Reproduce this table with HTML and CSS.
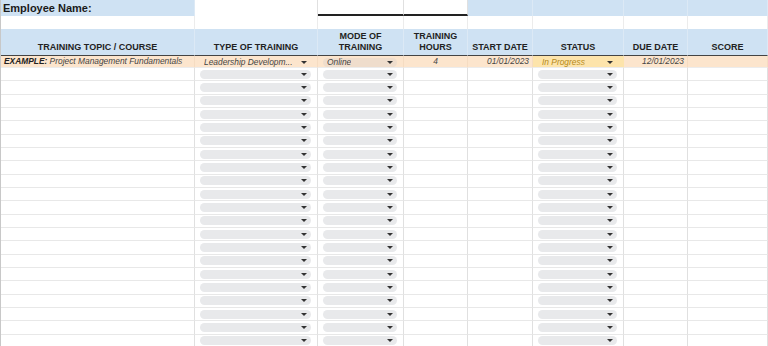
FILE: index.html
```html
<!DOCTYPE html>
<html>
<head>
<meta charset="utf-8">
<link rel="stylesheet" href="styles.css">
</head>
<body>
<div class="sheet">
  <div class="row r-name">
    <div class="c blue name-label">Employee Name:</div>
    <div class="c"></div>
    <div class="c underline"></div>
    <div class="c underline"></div>
    <div class="c blue"></div>
    <div class="c blue"></div>
    <div class="c blue"></div>
    <div class="c blue"></div>
  </div>
  <div class="row r-gap">
    <div class="c"></div><div class="c"></div><div class="c"></div><div class="c"></div><div class="c"></div><div class="c"></div><div class="c"></div><div class="c"></div>
  </div>
  <div class="row r-head">
    <div class="c h">TRAINING TOPIC / COURSE</div>
    <div class="c h">TYPE OF TRAINING</div>
    <div class="c h">MODE OF<br>TRAINING</div>
    <div class="c h">TRAINING<br>HOURS</div>
    <div class="c h">START DATE</div>
    <div class="c h">STATUS</div>
    <div class="c h">DUE DATE</div>
    <div class="c h">SCORE</div>
  </div>
  <div class="row r-ex">
    <div class="c ex-topic"><b>EXAMPLE:</b> Project Management Fundamentals</div>
    <div class="c"><span class="dd plain"><span class="dd-text">Leadership Developm...</span></span></div>
    <div class="c"><span class="dd faint"><span class="dd-text">Online</span></span></div>
    <div class="c center">4</div>
    <div class="c right">01/01/2023</div>
    <div class="c status"><span class="dd plain"><span class="dd-text">In Progress</span></span></div>
    <div class="c right">12/01/2023</div>
    <div class="c"></div>
  </div>
  <div class="row r-body"><div class="c"></div><div class="c"><span class="dd"></span></div><div class="c"><span class="dd"></span></div><div class="c"></div><div class="c"></div><div class="c"><span class="dd"></span></div><div class="c"></div><div class="c"></div></div>
  <div class="row r-body"><div class="c"></div><div class="c"><span class="dd"></span></div><div class="c"><span class="dd"></span></div><div class="c"></div><div class="c"></div><div class="c"><span class="dd"></span></div><div class="c"></div><div class="c"></div></div>
  <div class="row r-body"><div class="c"></div><div class="c"><span class="dd"></span></div><div class="c"><span class="dd"></span></div><div class="c"></div><div class="c"></div><div class="c"><span class="dd"></span></div><div class="c"></div><div class="c"></div></div>
  <div class="row r-body"><div class="c"></div><div class="c"><span class="dd"></span></div><div class="c"><span class="dd"></span></div><div class="c"></div><div class="c"></div><div class="c"><span class="dd"></span></div><div class="c"></div><div class="c"></div></div>
  <div class="row r-body"><div class="c"></div><div class="c"><span class="dd"></span></div><div class="c"><span class="dd"></span></div><div class="c"></div><div class="c"></div><div class="c"><span class="dd"></span></div><div class="c"></div><div class="c"></div></div>
  <div class="row r-body"><div class="c"></div><div class="c"><span class="dd"></span></div><div class="c"><span class="dd"></span></div><div class="c"></div><div class="c"></div><div class="c"><span class="dd"></span></div><div class="c"></div><div class="c"></div></div>
  <div class="row r-body"><div class="c"></div><div class="c"><span class="dd"></span></div><div class="c"><span class="dd"></span></div><div class="c"></div><div class="c"></div><div class="c"><span class="dd"></span></div><div class="c"></div><div class="c"></div></div>
  <div class="row r-body"><div class="c"></div><div class="c"><span class="dd"></span></div><div class="c"><span class="dd"></span></div><div class="c"></div><div class="c"></div><div class="c"><span class="dd"></span></div><div class="c"></div><div class="c"></div></div>
  <div class="row r-body"><div class="c"></div><div class="c"><span class="dd"></span></div><div class="c"><span class="dd"></span></div><div class="c"></div><div class="c"></div><div class="c"><span class="dd"></span></div><div class="c"></div><div class="c"></div></div>
  <div class="row r-body"><div class="c"></div><div class="c"><span class="dd"></span></div><div class="c"><span class="dd"></span></div><div class="c"></div><div class="c"></div><div class="c"><span class="dd"></span></div><div class="c"></div><div class="c"></div></div>
  <div class="row r-body"><div class="c"></div><div class="c"><span class="dd"></span></div><div class="c"><span class="dd"></span></div><div class="c"></div><div class="c"></div><div class="c"><span class="dd"></span></div><div class="c"></div><div class="c"></div></div>
  <div class="row r-body"><div class="c"></div><div class="c"><span class="dd"></span></div><div class="c"><span class="dd"></span></div><div class="c"></div><div class="c"></div><div class="c"><span class="dd"></span></div><div class="c"></div><div class="c"></div></div>
  <div class="row r-body"><div class="c"></div><div class="c"><span class="dd"></span></div><div class="c"><span class="dd"></span></div><div class="c"></div><div class="c"></div><div class="c"><span class="dd"></span></div><div class="c"></div><div class="c"></div></div>
  <div class="row r-body"><div class="c"></div><div class="c"><span class="dd"></span></div><div class="c"><span class="dd"></span></div><div class="c"></div><div class="c"></div><div class="c"><span class="dd"></span></div><div class="c"></div><div class="c"></div></div>
  <div class="row r-body"><div class="c"></div><div class="c"><span class="dd"></span></div><div class="c"><span class="dd"></span></div><div class="c"></div><div class="c"></div><div class="c"><span class="dd"></span></div><div class="c"></div><div class="c"></div></div>
  <div class="row r-body"><div class="c"></div><div class="c"><span class="dd"></span></div><div class="c"><span class="dd"></span></div><div class="c"></div><div class="c"></div><div class="c"><span class="dd"></span></div><div class="c"></div><div class="c"></div></div>
  <div class="row r-body"><div class="c"></div><div class="c"><span class="dd"></span></div><div class="c"><span class="dd"></span></div><div class="c"></div><div class="c"></div><div class="c"><span class="dd"></span></div><div class="c"></div><div class="c"></div></div>
  <div class="row r-body"><div class="c"></div><div class="c"><span class="dd"></span></div><div class="c"><span class="dd"></span></div><div class="c"></div><div class="c"></div><div class="c"><span class="dd"></span></div><div class="c"></div><div class="c"></div></div>
  <div class="row r-body"><div class="c"></div><div class="c"><span class="dd"></span></div><div class="c"><span class="dd"></span></div><div class="c"></div><div class="c"></div><div class="c"><span class="dd"></span></div><div class="c"></div><div class="c"></div></div>
  <div class="row r-body"><div class="c"></div><div class="c"><span class="dd"></span></div><div class="c"><span class="dd"></span></div><div class="c"></div><div class="c"></div><div class="c"><span class="dd"></span></div><div class="c"></div><div class="c"></div></div>
  <div class="row r-body"><div class="c"></div><div class="c"><span class="dd"></span></div><div class="c"><span class="dd"></span></div><div class="c"></div><div class="c"></div><div class="c"><span class="dd"></span></div><div class="c"></div><div class="c"></div></div>
  <div class="row r-body"><div class="c"></div><div class="c"><span class="dd"></span></div><div class="c"><span class="dd"></span></div><div class="c"></div><div class="c"></div><div class="c"><span class="dd"></span></div><div class="c"></div><div class="c"></div></div>
</div>
</body>
</html>
```

FILE: styles.css
```css
html, body {
  margin: 0;
  padding: 0;
  background: #ffffff;
}
body {
  width: 768px;
  height: 346px;
  overflow: hidden;
  font-family: "Liberation Sans", Arial, sans-serif;
  color: #222;
}
.sheet {
  width: 768px;
  border-left: 1px solid #c8c8c8;
  box-sizing: border-box;
}
.row {
  display: grid;
  grid-template-columns: 194px 123px 86px 64px 65px 91px 64px 80px;
}
.c {
  box-sizing: border-box;
  border-right: 1px solid #e0e0e0;
  border-bottom: 1px solid #e8e8e8;
  min-width: 0;
  overflow: hidden;
  white-space: nowrap;
}
.blue {
  background: #cfe2f3;
  border-right-color: #dce9f5;
  border-bottom-color: #cfe2f3;
}
.r-name { height: 16px; }
.r-name .c { border-bottom: 0; }
.name-label {
  font-size: 11px;
  font-weight: bold;
  line-height: 16px;
  padding-left: 2px;
  color: #1a1a1a;
}
.underline {
  border-bottom: 2px solid #222 !important;
}
.r-gap { height: 13px; }
.r-gap .c { border-bottom: 0; border-right-color: #ececec; }
.r-head { height: 27px; }
.r-head .c.h {
  background: #cfe2f3;
  border-right-color: #dce9f5;
  border-bottom: 1px solid #444;
  display: flex;
  align-items: flex-end;
  justify-content: center;
  text-align: center;
  font-size: 9px;
  font-weight: bold;
  line-height: 11px;
  padding-bottom: 2px;
  color: #222;
}
.r-ex { height: 12px; }
.r-ex .c {
  background: #fce5cd;
  border-right-color: #f5dcc2;
  border-bottom-color: #ececec;
  font-size: 8.4px;
  font-style: italic;
  line-height: 11px;
  color: #444;
}
.ex-topic { padding-left: 3px; }
.ex-topic b { color: #222; }
.center { text-align: center; }
.right { text-align: right; padding-right: 3px; }
.r-ex .c.status { background: #fde4ab; border-right-color: #fde4ab; }
.status .dd-text { color: #b58a1a; }
.r-body { height: 13.333px; }
.r-body .c { display: flex; align-items: center; }
.dd {
  flex: 1;
  height: 9px;
  margin: 0 6px 0 5px;
  border-radius: 5px;
  background: #e8e9eb;
  display: flex;
  align-items: center;
  justify-content: space-between;
  padding: 0 4px;
  box-sizing: border-box;
  position: relative;
}
.r-ex .c .dd { margin-top: 1px; }
.dd::after {
  content: "";
  margin-left: auto;
  border-left: 3px solid transparent;
  border-right: 3px solid transparent;
  border-top: 3.5px solid #333;
  width: 0;
  height: 0;
}
.dd.plain { background: transparent; }
.dd.faint { background: rgba(200, 200, 205, 0.25); }
.r-ex .c:nth-child(2),
.r-ex .c:nth-child(3),
.r-ex .c:nth-child(6) { display: flex; align-items: center; }
.dd-text {
  overflow: hidden;
  text-overflow: clip;
  white-space: nowrap;
}
```
